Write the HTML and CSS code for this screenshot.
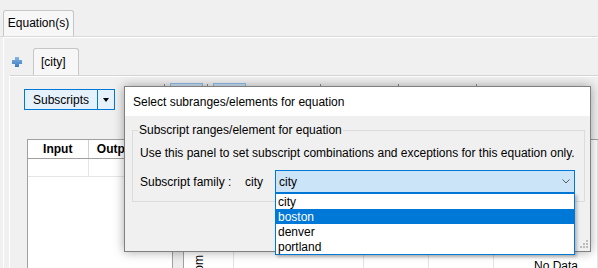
FILE: index.html
```html
<!DOCTYPE html>
<html lang="en">
<head>
  <meta charset="UTF-8" />
  <title>Equation subscripts</title>
  <link rel="stylesheet" href="styles.css">
</head>
<body>

  <!-- Top tabs -->
  <div class="tabbar">
    <div class="tab">Equation(s)</div>
  </div>

  <div class="panel">
    <div class="subtabs">
      <svg class="plus" width="10" height="10" viewBox="0 0 10 10">
        <defs>
          <linearGradient id="plusfill" x1="0" y1="0" x2="0" y2="1">
            <stop offset="0" stop-color="#86b7e6"/>
            <stop offset="1" stop-color="#3b79c2"/>
          </linearGradient>
        </defs>
        <path d="M3 0h4v3h3v4H7v3H3V7H0V3h3z" fill="url(#plusfill)"/>
      </svg>
      <div class="subtab">[city]</div>
    </div>

    <div class="inner">
      <!-- Toolbar -->
      <div class="toolbar">
        <div class="split">
          <span class="split-main">Subscripts</span>
          <span class="split-arrow"></span>
        </div>
        <div class="tools">
          <span class="sep"></span>
          <span class="tool"></span>
          <span class="sep"></span>
          <span class="tool"></span>
          <span class="sep sep-a"></span>
          <span class="sep sep-b"></span>
          <span class="sep sep-b"></span>
        </div>
      </div>

      <!-- Work area -->
      <div class="work">
        <div class="io-wrap">
          <table class="io">
            <tr><th class="c-in">Input</th><th class="c-out">Output</th><th></th></tr>
            <tr><td></td><td></td><td></td></tr>
          </table>
        </div>
        <div class="splitter"></div>
        <div class="chart">
          <div class="col col-1"><span class="vlabel">Custom</span></div>
          <div class="col col-2"></div>
          <div class="col col-3"></div>
          <div class="col col-3"></div>
          <div class="col col-last"><span class="nodata">No Data</span></div>
        </div>
      </div>
    </div>
  </div>

  <!-- Dialog -->
  <div class="dialog">
    <div class="dialog-title">Select subranges/elements for equation</div>
    <fieldset class="group">
      <legend>Subscript ranges/element for equation</legend>
      <p class="hint">Use this panel to set subscript combinations and exceptions for this equation only.</p>
      <div class="family">
        <span class="family-label">Subscript family :</span>
        <span class="family-name">city</span>
        <div class="combo">
          <span>city</span>
          <svg class="chev" width="8" height="5" viewBox="0 0 8 5"><path d="M.5.5 4 4 7.5.5" fill="none" stroke="#5a5a5a"/></svg>
        </div>
      </div>
    </fieldset>
    <svg class="grip" width="8" height="8" viewBox="0 0 8 8">
      <rect x="6" y="0" width="2" height="2"/>
      <rect x="3" y="3" width="2" height="2"/><rect x="6" y="3" width="2" height="2"/>
      <rect x="0" y="6" width="2" height="2"/><rect x="3" y="6" width="2" height="2"/><rect x="6" y="6" width="2" height="2"/>
    </svg>
  </div>

  <!-- Open combo list -->
  <ul class="droplist">
    <li>city</li>
    <li class="selected">boston</li>
    <li>denver</li>
    <li>portland</li>
  </ul>

</body>
</html>
```

FILE: styles.css
```css
body {
  margin: 0;
  width: 598px;
  height: 268px;
  overflow: hidden;
  background: #f0f0f0;
  font-family: "Liberation Sans", Arial, sans-serif;
  font-size: 12px;
  color: #000;
}

/* top tab strip */
.tabbar {
  height: 37px;
  box-sizing: border-box;
  padding: 10px 0 0 3px;
  border-bottom: 1px solid #d9d9d9;
}

.tab {
  width: 71px;
  height: 26px;
  box-sizing: border-box;
  border: 1px solid #c6c6c6;
  border-bottom: none;
  border-radius: 3px 3px 0 0;
  background: #f7f7f7;
  text-align: center;
  line-height: 25px;
}

.panel {
  margin-left: 3px;
  border-top: 1px solid #fff;
  border-left: 1px solid #fff;
}

.subtabs {
  height: 37px;
  box-sizing: border-box;
  padding: 10px 0 0 8px;
  display: flex;
  align-items: flex-start;
}

.plus {
  margin: 9px 11px 0 0;
}

.subtab {
  width: 46px;
  height: 27px;
  box-sizing: border-box;
  border: 1px solid #c6c6c6;
  border-bottom: none;
  border-radius: 3px 3px 0 0;
  background: #f7f7f7;
  padding-left: 7px;
  line-height: 27px;
}

.inner {
  margin-left: 5px;
  border-top: 1px solid #d5d5d5;
  border-left: 1px solid #fff;
}

/* toolbar */
.toolbar {
  height: 63px;
  box-sizing: border-box;
  border-top: 1px solid #fff;
  padding-left: 14px;
  display: flex;
  align-items: flex-start;
}

.split {
  display: flex;
  height: 21px;
  box-sizing: border-box;
  margin-top: 12px;
  border: 1px solid #0078d7;
  background: #e5f1fb;
}

.split-main {
  width: 72px;
  border-right: 1px solid #0078d7;
  text-align: center;
  line-height: 20px;
}

.split-arrow {
  width: 16px;
  display: flex;
  justify-content: center;
  align-items: center;
}

.split-arrow::after {
  content: "";
  border-style: solid;
  border-width: 4px 3.5px 0;
  border-color: #000 transparent transparent;
}

.tools {
  display: flex;
  align-items: flex-start;
  margin: 6px 0 0 49px;
}

.sep {
  width: 1px;
  height: 8px;
  margin-top: 1px;
  background: #8a8a8a;
}

.sep-a { margin-left: 70px; }
.sep-b { margin-left: 77px; }

.tool {
  width: 33px;
  height: 22px;
  box-sizing: border-box;
  margin: 0 4px 0 5px;
  border: 1px solid #8fbde6;
  background: #cce4f7;
}

/* work area */
.work {
  display: flex;
  height: 129px;
  padding-left: 17px;
}

.io-wrap {
  width: 145px;
  box-sizing: border-box;
  background: #fff;
  border-top: 1px solid #a0a0a0;
  border-left: 1px solid #a0a0a0;
}

.io {
  width: 100%;
  border-collapse: collapse;
}

.io th,
.io td {
  height: 18px;
  padding: 0;
  box-sizing: border-box;
}

.io th {
  font-weight: bold;
  border-bottom: 1px solid #a0a0a0;
  border-right: 1px solid #d0d0d0;
}

.io td {
  border-bottom: 1px solid #e6e6e6;
  border-right: 1px solid #e6e6e6;
}

.io .c-in { width: 60px; }
.io .c-out { width: 57px; }

.splitter {
  width: 12px;
  box-sizing: border-box;
  border-left: 1px solid #a0a0a0;
  border-right: 1px solid #a0a0a0;
  background: #ececec;
}

.chart {
  flex: 1;
  display: flex;
  background: #fff;
  border-top: 1px solid #a0a0a0;
  overflow: hidden;
}

.col {
  box-sizing: border-box;
  border-right: 1px solid #e3e3e3;
  flex: none;
}

.col-1 {
  width: 50px;
  padding: 115px 0 0 8px;
}

.col-2 { width: 130px; }
.col-3 { width: 65px; }

.col-last {
  flex: 1;
  padding: 119px 0 0 40px;
}

.vlabel {
  display: inline-block;
  writing-mode: vertical-rl;
  transform: rotate(180deg);
}

.nodata {
  white-space: nowrap;
}

/* dialog */
.dialog {
  position: absolute;
  left: 124px;
  top: 86px;
  width: 467px;
  height: 166px;
  box-sizing: border-box;
  border: 1px solid #808080;
  background: #f0f0f0;
  box-shadow: 0 0 10px rgba(0, 0, 0, 0.35);
}

.dialog-title {
  height: 29px;
  padding-left: 8px;
  background: #fff;
  line-height: 31px;
}

.group {
  margin: 6px 5px 0 7px;
  padding: 0 7px 8px;
  border: 1px solid #dcdcdc;
  min-width: 0;
}

.group legend {
  padding: 0 1px;
  margin-left: -2px;
  line-height: 16px;
}

.hint {
  margin: 7px 0 0;
  line-height: 16px;
  white-space: nowrap;
}

.family {
  display: flex;
  align-items: center;
  margin-top: 9px;
}

.family-label { width: 105px; }
.family-name { width: 30px; }

.combo {
  width: 300px;
  height: 23px;
  box-sizing: border-box;
  padding: 0 4px 0 3px;
  border: 1px solid #0078d7;
  background: #cce4f7;
  display: flex;
  align-items: center;
  justify-content: space-between;
}

.grip {
  position: absolute;
  right: 2px;
  bottom: 3px;
  fill: #bdbdbd;
}

/* open dropdown */
.droplist {
  position: absolute;
  left: 275px;
  top: 193px;
  width: 300px;
  margin: 0;
  padding: 0;
  list-style: none;
  box-sizing: border-box;
  background: #fff;
  border: 1px solid #0078d7;
  box-shadow: 2px 2px 3px rgba(0, 0, 0, 0.25);
}

.droplist li {
  height: 15px;
  box-sizing: border-box;
  padding: 1px 0 0 2px;
  line-height: 15px;
}

.droplist .selected {
  background: #0078d7;
  color: #fff;
}
```
